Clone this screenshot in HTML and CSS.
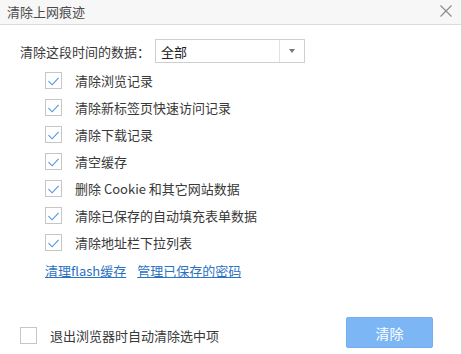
FILE: index.html
```html
<!DOCTYPE html>
<html lang="zh-CN">
  <head>
    <meta charset="UTF-8" />
    <title>清除上网痕迹</title>
    <link rel="stylesheet" href="styles.css">
  </head>
  <body>
    <div class="dialog">
      <div class="titlebar">
        <span class="title">清除上网痕迹</span>
        <svg class="close" width="12" height="12" viewBox="0 0 12 12">
          <path d="M0.5 0.5 L11.5 11.5 M11.5 0.5 L0.5 11.5" stroke="#8a8a8a" stroke-width="1.1" fill="none" />
        </svg>
      </div>

      <div class="content">
        <div class="range">
          <span class="range-label">清除这段时间的数据：</span>
          <div class="select">
            <span class="select-value">全部</span>
            <span class="select-arrow"></span>
          </div>
        </div>

        <ul class="checklist">
          <li><span class="check"><svg viewBox="0 0 10 8"><path d="M0.4 3.6 L3.8 7 L9.6 0.6" /></svg></span>清除浏览记录</li>
          <li><span class="check"><svg viewBox="0 0 10 8"><path d="M0.4 3.6 L3.8 7 L9.6 0.6" /></svg></span>清除新标签页快速访问记录</li>
          <li><span class="check"><svg viewBox="0 0 10 8"><path d="M0.4 3.6 L3.8 7 L9.6 0.6" /></svg></span>清除下载记录</li>
          <li><span class="check"><svg viewBox="0 0 10 8"><path d="M0.4 3.6 L3.8 7 L9.6 0.6" /></svg></span>清空缓存</li>
          <li><span class="check"><svg viewBox="0 0 10 8"><path d="M0.4 3.6 L3.8 7 L9.6 0.6" /></svg></span>删除 Cookie 和其它网站数据</li>
          <li><span class="check"><svg viewBox="0 0 10 8"><path d="M0.4 3.6 L3.8 7 L9.6 0.6" /></svg></span>清除已保存的自动填充表单数据</li>
          <li><span class="check"><svg viewBox="0 0 10 8"><path d="M0.4 3.6 L3.8 7 L9.6 0.6" /></svg></span>清除地址栏下拉列表</li>
        </ul>

        <div class="links">
          <a href="#">清理flash缓存</a>
          <a href="#">管理已保存的密码</a>
        </div>
      </div>

      <div class="footer">
        <label class="auto-clear"><span class="check"></span>退出浏览器时自动清除选中项</label>
        <button class="btn-clear">清除</button>
      </div>
    </div>
  </body>
</html>
```

FILE: styles.css
```css
body {
  margin: 0;
  font-family: "Noto Sans CJK SC", "Noto Sans", sans-serif;
  font-size: 13px;
  color: #383838;
  background: #fff;
}
.dialog {
  width: 462px;
  height: 354px;
  box-sizing: border-box;
  border-right: 1px solid #d4d4d4;
  display: flex;
  flex-direction: column;
}
.titlebar {
  height: 24px;
  border-bottom: 1px solid #dcdcdc;
  background: #f7f7f7;
  display: flex;
  align-items: center;
  justify-content: space-between;
  padding: 0 9px 0 7px;
}
.title {
  color: #4a4a4a;
  line-height: 24px;
}
.close {
  display: block;
  margin-top: -2px;
}
.content {
  padding: 14px 20px 0 20px;
}
.range {
  display: flex;
  align-items: center;
  height: 24px;
}
.range-label {
  width: 135px;
}
.select {
  width: 150px;
  height: 24px;
  box-sizing: border-box;
  border: 1px solid #cfcfcf;
  display: flex;
  align-items: center;
}
.select-value {
  flex: 1;
  padding-left: 5px;
  color: #222;
}
.select-arrow {
  width: 24px;
  height: 22px;
  border-left: 1px solid #e2e2e2;
  position: relative;
}
.select-arrow::after {
  content: "";
  position: absolute;
  left: 9px;
  top: 9px;
  border-left: 3px solid transparent;
  border-right: 3px solid transparent;
  border-top: 4px solid #777;
}
.checklist {
  list-style: none;
  margin: 4px 0 0 0;
  padding: 0 0 0 25px;
}
.checklist li {
  height: 27px;
  display: flex;
  align-items: center;
}
.check {
  width: 17px;
  height: 17px;
  box-sizing: border-box;
  border: 1px solid #c6c6c6;
  margin-right: 13px;
  flex: none;
  display: flex;
  align-items: center;
  justify-content: center;
}
.check svg {
  width: 11px;
  height: 9px;
  margin-top: 1px;
}
.check path {
  stroke: #4f95e3;
  stroke-width: 1;
  fill: none;
}
.links {
  padding-left: 25px;
  margin-top: 5px;
  line-height: 20px;
}
.links a {
  color: #2b72c2;
  margin-right: 8px;
}
.footer {
  margin-top: auto;
  display: flex;
  align-items: center;
  justify-content: space-between;
  padding: 0 28px 6px 20px;
}
.auto-clear {
  display: flex;
  align-items: center;
  padding-top: 6px;
}
.btn-clear {
  width: 87px;
  height: 31px;
  border: 1px solid #74aef0;
  border-radius: 2px;
  background: #7db6f5;
  color: #fff;
  font-family: "Noto Sans CJK SC", sans-serif;
  font-size: 14px;
  padding: 0;
}
```
